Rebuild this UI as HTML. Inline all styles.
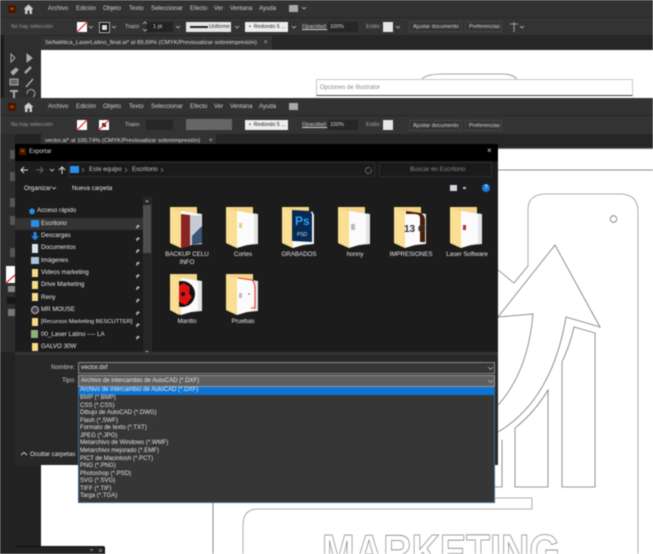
<!DOCTYPE html>
<html lang="es"><head><meta charset="utf-8"><title>Exportar</title>
<style>
html,body{margin:0;padding:0;background:#fff}
#r{position:relative;width:653px;height:554px;overflow:hidden;background:#fff;font-family:"Liberation Sans",sans-serif;filter:blur(.45px)}
#r div,#r span.a{position:absolute}
.t{position:absolute;white-space:nowrap;font-size:6px;line-height:8px;color:#d4d4d4}
.m{position:absolute;white-space:nowrap;font-size:6.1px;line-height:8px;color:#cfcfcf}
.l{position:absolute;white-space:nowrap;font-size:6.2px;line-height:8px;color:#e6e6e6}
.c{text-align:center;width:54px;line-height:7.5px;white-space:normal}
.d{position:absolute;white-space:nowrap;font-size:6.05px;line-height:7.6px;color:#e2e2e2;left:80px}
svg{position:absolute;overflow:visible}
</style></head><body><div id="r">
<!-- artwork -->
<svg style="left:0;top:0" width="653" height="554" viewBox="0 0 653 554" fill="none" stroke="#777" stroke-width=".8">
<path d="M498 170H653" stroke="#666"/>
<path d="M528 266V210Q528 194 546 194H620Q638 194 638 212V554" stroke="#999"/>
<circle cx="613.500" cy="219" r="3.300"/>
<path d="M498 270L514 283L528 266"/>
<path d="M498 317L555 245L600 327L566 317Q552 400 498 432"/>
<path d="M498 317L533 314Q528 372 498 405"/>
<path d="M574 327L595 333V487H562V362Q570 345 574 327Z"/>
<path d="M548 390V487H515V428Q535 412 548 390Z"/>
<path d="M502 440V487H495"/>
<path d="M495 498H532V509H258Q243 509 243 525V554" stroke="#999"/>
<path d="M213 465V554" stroke="#888" stroke-width="1"/>
<path d="M422 79Q426 74 445 74H503Q512 74 517 79" stroke="#888"/>
<text x="322" y="567" font-family="Liberation Sans" font-weight="700" font-size="46" textLength="238" lengthAdjust="spacingAndGlyphs" fill="#fff" stroke="#888" stroke-width=".8">MARKETING</text>
</svg>
<div style="left:316px;top:79px;width:317px;height:17px;background:#fff;border:1px solid #c9c9c9;border-bottom:1px solid #444;box-sizing:border-box"></div>
<span class="t" style="left:320px;top:84px;color:#8a8a8a">Opciones de Illustrator</span>

<!-- top Illustrator window -->
<div style="left:0;top:0;width:653px;height:17px;background:#323232"></div>
<div style="left:0;top:17px;width:653px;height:18px;background:#333;border-top:1px solid #272727;box-sizing:border-box"></div>
<div style="left:0;top:35px;width:653px;height:15px;background:#262626"></div>
<div style="left:41px;top:36px;width:231px;height:14px;background:#333"></div>
<div style="left:0;top:35px;width:41px;height:63px;background:#2e2e2e"></div>
<div style="left:0;top:35px;width:4px;height:63px;background:#1c1c1c"></div>
<div style="left:0;top:98px;width:633px;height:3px;background:#333"></div>
<div style="left:633px;top:98px;width:20px;height:3px;background:#333"></div>
<div style="left:8px;top:5px;width:8px;height:8px;background:#4a1500;color:#f90;font-size:4px;line-height:8px;text-align:center">Ai</div>
<svg style="left:23px;top:4px" width="11" height="10" viewBox="0 0 11 10"><path d="M.5 5L5.500.5L10.500 5H9V10H6.500V6.500H4.500V10H2V5Z" fill="#ccc"/></svg>
<span class="m" style="left:48px;top:5px">Archivo</span><span class="m" style="left:76px;top:5px">Edición</span><span class="m" style="left:103px;top:5px">Objeto</span><span class="m" style="left:129px;top:5px">Texto</span><span class="m" style="left:151px;top:5px">Seleccionar</span><span class="m" style="left:190px;top:5px">Efecto</span><span class="m" style="left:214px;top:5px">Ver</span><span class="m" style="left:230px;top:5px">Ventana</span><span class="m" style="left:259px;top:5px">Ayuda</span>
<div style="left:289px;top:5px;width:9px;height:7px;background:#aaa"></div>
<span class="t" style="left:11px;top:23px;font-size:5.500px;color:#9f9f9f">No hay selección</span>
<div style="left:77px;top:22px;width:10px;height:10px;background:#fff"></div>
<svg style="left:77px;top:22px" width="10" height="10"><path d="M0 10L10 0" stroke="#e22" stroke-width="1.200"/></svg>
<div style="left:99px;top:22px;width:11px;height:11px;background:#111;border:1px solid #aaa;box-sizing:border-box"></div>
<div style="left:102px;top:25px;width:5px;height:5px;background:#ddd"></div>
<span class="t" style="left:125px;top:23px;font-size:5.500px">Trazo:</span>
<div style="left:146px;top:22px;width:27px;height:10px;background:#232323"></div>
<span class="t" style="left:153px;top:23px;font-size:5.500px">1 pt</span>
<div style="left:186px;top:22px;width:45px;height:10px;background:#e8e8e8"></div>
<div style="left:190px;top:26px;width:18px;height:1.500px;background:#222"></div>
<span class="t" style="left:209px;top:23px;font-size:5.100px;color:#222">Uniforme</span>
<div style="left:245px;top:22px;width:43px;height:10px;background:#eee"></div>
<span class="t" style="left:249px;top:23px;font-size:5.300px;color:#222">•&nbsp; Redondo 5 ...</span>
<span class="t" style="left:302px;top:23px;font-size:5.500px;text-decoration:underline">Opacidad:</span>
<div style="left:328px;top:22px;width:30px;height:10px;background:#262626"></div>
<span class="t" style="left:330px;top:23px;font-size:5.500px">100%</span>
<span class="t" style="left:366px;top:23px;font-size:5.500px;color:#aaa">Estilo:</span>
<div style="left:383px;top:22px;width:10px;height:10px;background:#e6e6e6"></div>
<div style="left:409px;top:21px;width:53px;height:11px;border:1px solid #444;box-sizing:border-box"></div>
<span class="t" style="left:413px;top:23px;font-size:5.500px">Ajustar documento</span>
<div style="left:465px;top:21px;width:37px;height:11px;border:1px solid #444;box-sizing:border-box"></div>
<span class="t" style="left:469px;top:23px;font-size:5.500px">Preferencias</span>
<span class="t" style="left:45px;top:39px;font-size:5.900px;color:#dcdcdc">Señalética_LaserLatino_final.ai* al 89,69% (CMYK/Previsualizar sobreimpresión)</span>
<span class="t" style="left:264px;top:39px;color:#ccc">×</span>
<svg style="left:0;top:0" width="60" height="140" fill="none" stroke="#aaa" stroke-width="1">
<path d="M11 54V62L15 58Z"/><path d="M27 54V62L32 58Z" fill="#aaa"/>
<path d="M11 72L16 68L18 70L13 75Z" fill="#aaa"/><path d="M25 73L31 67" stroke-width="2.500"/>
<rect x="10" y="79" width="8" height="6" fill="#666"/><path d="M26 87L33 79" stroke-width="1.500"/>
<path d="M10 91H18M14 91V98" stroke-width="2"/><path d="M27 94A4 4 0 1 1 33 97"/>
</svg>
<!-- chevrons top -->
<svg style="left:0;top:0" width="653" height="133" fill="none" stroke="#bbb" stroke-width=".8">
<path d="M89 26L91 28L93 26M112 26L114 28L116 26M176 26L178 28L180 26M235 26L237 28L239 26M292 26L294 28L296 26M396 26L398 28L400 26M302 7L304 9L306 7M520 26L522 28L524 26M143 24L145 22L147 24M143 29L145 31L147 29M510 24H518M514 22V32"/>
<path d="M89 124L91 126L93 124M112 124L114 126L116 124M176 124L178 126L180 124M292 124L294 126L296 124M396 124L398 126L400 124M302 105L304 107L306 105M520 124L522 126L524 124M143 122L145 120L147 122M143 127L145 129L147 127M510 122H518M514 120V130"/>
</svg>

<!-- second Illustrator window -->
<div style="left:0;top:101px;width:653px;height:15px;background:#323232"></div>
<div style="left:0;top:115px;width:653px;height:19px;background:#333;border-top:1px solid #272727;box-sizing:border-box"></div>
<div style="left:0;top:134px;width:653px;height:14px;background:#262626"></div>
<div style="left:41px;top:134px;width:175px;height:11px;background:#333"></div>
<div style="left:0;top:134px;width:41px;height:420px;background:#222"></div>
<div style="left:0;top:134px;width:15px;height:218px;background:#2c2c2c"></div>
<div style="left:8px;top:103px;width:8px;height:8px;background:#4a1500;color:#f90;font-size:4px;line-height:8px;text-align:center">Ai</div>
<svg style="left:23px;top:102px" width="11" height="10" viewBox="0 0 11 10"><path d="M.5 5L5.500.5L10.500 5H9V10H6.500V6.500H4.500V10H2V5Z" fill="#ccc"/></svg>
<span class="m" style="left:48px;top:103px">Archivo</span><span class="m" style="left:76px;top:103px">Edición</span><span class="m" style="left:103px;top:103px">Objeto</span><span class="m" style="left:129px;top:103px">Texto</span><span class="m" style="left:151px;top:103px">Seleccionar</span><span class="m" style="left:190px;top:103px">Efecto</span><span class="m" style="left:214px;top:103px">Ver</span><span class="m" style="left:230px;top:103px">Ventana</span><span class="m" style="left:259px;top:103px">Ayuda</span>
<div style="left:289px;top:103px;width:9px;height:7px;background:#aaa"></div>
<span class="t" style="left:11px;top:121px;font-size:5.500px;color:#9f9f9f">No hay selección</span>
<div style="left:77px;top:120px;width:10px;height:10px;background:#fff"></div>
<svg style="left:77px;top:120px" width="10" height="10"><path d="M0 10L10 0" stroke="#e22" stroke-width="1.200"/></svg>
<div style="left:99px;top:120px;width:10px;height:10px;background:#fff"></div>
<svg style="left:99px;top:120px" width="10" height="10"><rect x="3" y="3" width="4" height="4" fill="#333"/><path d="M0 10L10 0" stroke="#e22" stroke-width="1.200"/></svg>
<span class="t" style="left:125px;top:121px;font-size:5.500px">Trazo:</span>
<div style="left:146px;top:120px;width:27px;height:10px;background:#262626"></div>
<div style="left:186px;top:119px;width:46px;height:11px;background:#666"></div>
<div style="left:245px;top:120px;width:43px;height:10px;background:#eee"></div>
<span class="t" style="left:249px;top:121px;font-size:5.300px;color:#222">•&nbsp; Redondo 5 ...</span>
<span class="t" style="left:302px;top:121px;font-size:5.500px;text-decoration:underline">Opacidad:</span>
<div style="left:328px;top:120px;width:30px;height:10px;background:#262626"></div>
<span class="t" style="left:330px;top:121px;font-size:5.500px">100%</span>
<span class="t" style="left:366px;top:121px;font-size:5.500px;color:#aaa">Estilo:</span>
<div style="left:383px;top:120px;width:10px;height:10px;background:#e6e6e6"></div>
<div style="left:409px;top:120px;width:53px;height:11px;border:1px solid #444;box-sizing:border-box"></div>
<span class="t" style="left:413px;top:122px;font-size:5.500px">Ajustar documento</span>
<div style="left:465px;top:120px;width:37px;height:11px;border:1px solid #444;box-sizing:border-box"></div>
<span class="t" style="left:469px;top:122px;font-size:5.500px">Preferencias</span>
<span class="t" style="left:45px;top:137px;font-size:5.900px;color:#dcdcdc">vector.ai* al 100,74% (CMYK/Previsualizar sobreimpresión)</span>
<span class="t" style="left:209px;top:137px;color:#ccc">×</span>
<div style="left:498px;top:148px;width:155px;height:1px;background:#777"></div>

<!-- left side pieces -->
<div style="left:6px;top:266px;width:9px;height:17px;background:#fff"></div>
<svg style="left:6px;top:266px" width="9" height="17"><path d="M0 17L9 9" stroke="#e22" stroke-width="1.200"/></svg>
<div style="left:7px;top:297px;width:8px;height:7px;background:#161616"></div>
<div style="left:8px;top:286px;width:7px;height:6px;background:#888"></div>
<div style="left:8px;top:309px;width:7px;height:7px;background:#777"></div>
<div style="left:10px;top:150px;width:5px;height:9px;background:#555"></div>
<div style="left:10px;top:172px;width:5px;height:9px;background:#555"></div>
<div style="left:10px;top:198px;width:5px;height:9px;background:#555"></div>
<div style="left:10px;top:216px;width:5px;height:9px;background:#555"></div>
<div style="left:10px;top:248px;width:5px;height:9px;background:#555"></div>

<!-- dialog -->
<div style="left:15px;top:144px;width:483px;height:321px;background:#1c1c1c"></div>
<div style="left:15px;top:144px;width:483px;height:17px;background:#000"></div>
<div style="left:19px;top:148px;width:7px;height:7px;background:#4a1500;color:#f90;font-size:3.500px;line-height:7px;text-align:center">Ai</div>
<span class="t" style="left:29px;top:148px;font-size:6px;color:#ddd">Exportar</span>
<span class="t" style="left:487px;top:147px;font-size:8px;color:#ddd">×</span>
<div style="left:68px;top:162px;width:307px;height:15px;background:#1a1a1a;border:1px solid #2c2c2c;box-sizing:border-box"></div>
<div style="left:379px;top:162px;width:113px;height:15px;background:#1a1a1a;border:1px solid #2c2c2c;box-sizing:border-box"></div>
<div style="left:70px;top:166px;width:9px;height:7px;background:#2b8fe8"></div>
<svg style="left:0;top:0" width="500" height="200" fill="none" stroke="#ddd" stroke-width="1">
<path d="M21 170H28M24 167L21 170L24 173"/><path d="M36 170H43M40 167L43 170L40 173" stroke="#666"/><path d="M50 169L52 171L54 169" stroke-width=".8"/><path d="M62 174V167M59 170L62 167L65 170"/>
<path d="M82 168L84 170L82 172M125 168L127 170L125 172M161 168L163 170L161 172" stroke="#888" stroke-width=".7"/>
<path d="M52 187L54 189L56 187" stroke="#ccc" stroke-width=".8"/>
<path d="M371 169A3 3 0 1 1 370 168" stroke="#888" stroke-width=".7"/>
</svg>
<span class="l" style="left:89px;top:166px;color:#c4c4c4">Este equipo</span>
<span class="l" style="left:132px;top:166px;color:#c4c4c4">Escritorio</span>
<span class="l" style="left:410px;top:166px;color:#888">Buscar en Escritorio</span>
<span class="l" style="left:24px;top:185px">Organizar</span>
<span class="l" style="left:72px;top:185px">Nueva carpeta</span>
<div style="left:450px;top:185px;width:7px;height:6px;background:#cfd8e0"></div>
<div style="left:463px;top:187px;width:3px;height:2px;background:#bbb"></div>
<div style="left:482px;top:184px;width:8px;height:8px;border-radius:50%;background:#1a78d8;color:#fff;font-size:6px;line-height:8px;text-align:center">?</div>

<!-- sidebar -->
<div style="left:15px;top:218px;width:128px;height:12px;background:#333"></div>
<div style="left:143px;top:197px;width:8px;height:155px;background:#262626"></div>
<div style="left:143px;top:205px;width:8px;height:48px;background:#4d4d4d"></div>
<div style="left:151px;top:197px;width:1px;height:155px;background:#2b2b2b"></div>
<span class="l" style="left:37px;top:207px">Acceso rápido</span>
<span class="a" style="left:29px;top:208px;width:6px;height:6px;background:#2b8fe8;clip-path:polygon(50% 0,100% 40%,80% 100%,20% 100%,0 40%)"></span>
<span class="l" style="left:41px;top:219.500px">Escritorio</span>
<span class="l" style="left:41px;top:232px">Descargas</span>
<span class="l" style="left:41px;top:244px">Documentos</span>
<span class="l" style="left:41px;top:256.500px">Imágenes</span>
<span class="l" style="left:41px;top:269px">Videos marketing</span>
<span class="l" style="left:41px;top:281px">Drive Marketing</span>
<span class="l" style="left:41px;top:293.500px">Reny</span>
<span class="l" style="left:41px;top:306px">MR MOUSE</span>
<span class="l" style="left:41px;top:318px;font-size:5.800px">[Recursos Marketing BESCUTTER]</span>
<span class="l" style="left:41px;top:330.500px">00_Laser Latino ---- LA</span>
<span class="l" style="left:41px;top:342.500px">GALVO 30W</span>
<div style="left:31px;top:220px;width:8px;height:7px;background:#2b8fe8"></div>
<svg style="left:31px;top:232px" width="8" height="9"><path d="M2.500 0H5.500V4H8L4 8.500L0 4H2.500Z" fill="#2b82dc"/></svg>
<div style="left:32px;top:244px;width:6px;height:9px;background:#d8e6f2"></div>
<div style="left:31px;top:257px;width:8px;height:7px;background:#a9c4dc"></div>
<div style="left:32px;top:269px;width:6px;height:8px;background:#f6dc86"></div>
<div style="left:32px;top:281px;width:6px;height:8px;background:#f6dc86"></div>
<div style="left:32px;top:293px;width:6px;height:8px;background:#f6dc86"></div>
<div style="left:31px;top:306px;width:8px;height:8px;border-radius:50%;background:#444;border:1px solid #bbb;box-sizing:border-box"></div>
<div style="left:32px;top:318px;width:6px;height:8px;background:#f6dc86"></div>
<div style="left:31px;top:330px;width:7px;height:8px;background:#8fb27a"></div>
<div style="left:32px;top:343px;width:6px;height:8px;background:#f6dc86"></div>
<svg style="left:0;top:0" width="160" height="360" fill="#aaa">
<path d="M136 226.500L138 224.500L140 226L138 227.500L136.500 229Z"/>
<path d="M136 239L138 237L140 238.500L138 240L136.500 241.500Z"/><path d="M136 251L138 249L140 250.500L138 252L136.500 253.500Z"/><path d="M136 263.500L138 261.500L140 263L138 264.500L136.500 266Z"/><path d="M136 276L138 274L140 275.500L138 277L136.500 278.500Z"/><path d="M136 288L138 286L140 287.500L138 289L136.500 290.500Z"/><path d="M136 300.500L138 298.500L140 300L138 301.500L136.500 303Z"/><path d="M136 313L138 311L140 312.500L138 314L136.500 315.500Z"/><path d="M136 325L138 323L140 324.500L138 326L136.500 327.500Z"/><path d="M136 337.500L138 335.500L140 337L138 338.500L136.500 340Z"/>
<path d="M145 202L147 200L149 202ZM145 351L147 353L149 351Z"/>
</svg>

<!-- folders -->
<svg width="0" height="0" style="position:absolute"><defs><g id="f">
<path d="M0 1H27V8L11 42L0 37Z" fill="#f5d688"/>
<path d="M12 5L32 8V38L12 40Z" fill="#e4e4e4"/>
<path d="M11 5L28 8V37L11 42Z" fill="#fbfbfb"/>
<path d="M0 1L11 6V42L0 37Z" fill="#f9de94"/>
</g></defs></svg>
<svg style="left:170px;top:206px" width="33" height="42"><use href="#f"/><path d="M11 8L20 9V40L11 42Z" fill="#8a2323"/><path d="M20 9L31 10V37L20 39Z" fill="#c6ccd4"/><path d="M22 30L32 20V37L22 39Z" fill="#3b5478"/></svg>
<svg style="left:226px;top:206px" width="33" height="42"><use href="#f"/><rect x="13" y="17" width="3" height="5" fill="#e8c98a"/></svg>
<svg style="left:282px;top:206px" width="33" height="42"><use href="#f"/><path d="M10 4L31 6V38L10 37Z" fill="#fff"/><path d="M10 4L28 5L30 8V36L10 35Z" fill="#062a52"/><text x="13" y="19" font-family="Liberation Sans" font-size="12" font-weight="700" fill="#2fa3f7">Ps</text><text x="15" y="30" font-family="Liberation Sans" font-size="5" fill="#ddd">PSD</text></svg>
<svg style="left:338px;top:206px" width="33" height="42"><use href="#f"/><rect x="13" y="18" width="4" height="6" fill="#bbb"/></svg>
<svg style="left:394px;top:206px" width="33" height="42"><use href="#f"/><path d="M12 5L27 7Q31 10 31 14V36H26V12Q26 8 20 8H12Z" fill="#4a1c08"/><text x="10" y="26" font-family="Liberation Sans" font-size="10" font-weight="700" fill="#333">13 O</text></svg>
<svg style="left:450px;top:206px" width="33" height="42"><use href="#f"/><rect x="13" y="19" width="3" height="5" fill="#a33"/></svg>
<svg style="left:170px;top:273px" width="33" height="42"><use href="#f"/><circle cx="12" cy="21" r="13" fill="#111"/><path d="M6 14L14 10L20 14L19 20L22 24L16 32L11 30L5 26Z" fill="#d11"/><path d="M0 1L9 4V42L0 37Z" fill="#f9de94"/><circle cx="13" cy="21" r="2" fill="#111"/></svg>
<svg style="left:226px;top:273px" width="33" height="42"><use href="#f"/><path d="M12 5L26 7Q29 10 29 14V35H25" fill="none" stroke="#e33" stroke-width="1"/><rect x="13" y="20" width="3" height="5" fill="#bbb"/><circle cx="23" cy="21" r=".8" fill="#e33"/></svg>
<span class="l c" style="left:160px;top:251px">BACKUP CELU INFO</span>
<span class="l c" style="left:216px;top:251px">Cortes</span>
<span class="l c" style="left:272px;top:251px">GRABADOS</span>
<span class="l c" style="left:328px;top:251px">honny</span>
<span class="l c" style="left:384px;top:251px">IMPRESIONES</span>
<span class="l c" style="left:440px;top:251px">Laser Software</span>
<span class="l c" style="left:160px;top:318px">Mantto</span>
<span class="l c" style="left:216px;top:318px">Pruebas</span>

<!-- bottom of dialog -->
<div style="left:15px;top:352px;width:483px;height:113px;background:#282828"></div>
<div style="left:15px;top:352px;width:483px;height:3px;background:#333"></div>
<span class="l" style="left:51px;top:364px;color:#c8c8c8">Nombre:</span>
<div style="left:78px;top:362px;width:417px;height:12px;background:#363636;border:1px solid #888;box-sizing:border-box"></div>
<span class="l" style="left:81px;top:364px">vector.dxf</span>
<span class="l" style="left:62px;top:377px;color:#c8c8c8">Tipo:</span>
<div style="left:78px;top:375px;width:417px;height:12px;background:#5e5e5e;border:1px solid #999;box-sizing:border-box"></div>
<span class="l" style="left:81px;top:377px;font-size:6.050px">Archivo de intercambio de AutoCAD (*.DXF)</span>
<span class="l" style="left:30px;top:451px">Ocultar carpetas</span>
<svg style="left:20px;top:451px" width="8" height="6"><path d="M1 4L4 1.500L7 4" fill="none" stroke="#ccc"/></svg>
<svg style="left:0;top:0" width="500" height="400" fill="none" stroke="#aaa" stroke-width=".8"><path d="M488 367L490.500 369.500L493 367M488 380L490.500 382.500L493 380"/></svg>

<!-- dropdown -->
<div style="left:78px;top:387px;width:417px;height:115.500px;background:#363636;border:1px solid #3b6a94;border-top:0;box-sizing:border-box"></div>
<div style="left:79px;top:387px;width:415px;height:8px;background:#0d74d4"></div>
<span class="d" style="top:387.300px;color:#f0f0f0">Archivo de intercambio de AutoCAD (*.DXF)</span>
<span class="d" style="top:395px">BMP (*.BMP)</span>
<span class="d" style="top:402.500px">CSS (*.CSS)</span>
<span class="d" style="top:410px">Dibujo de AutoCAD (*.DWG)</span>
<span class="d" style="top:417.700px">Flash (*.SWF)</span>
<span class="d" style="top:425.300px">Formato de texto (*.TXT)</span>
<span class="d" style="top:432.800px">JPEG (*.JPG)</span>
<span class="d" style="top:440.400px">Metarchivo de Windows (*.WMF)</span>
<span class="d" style="top:447.900px">Metarchivo mejorado (*.EMF)</span>
<span class="d" style="top:455.500px">PICT de Macintosh (*.PCT)</span>
<span class="d" style="top:463px">PNG (*.PNG)</span>
<span class="d" style="top:470.700px">Photoshop (*.PSD)</span>
<span class="d" style="top:478.300px">SVG (*.SVG)</span>
<span class="d" style="top:485.800px">TIFF (*.TIF)</span>
<span class="d" style="top:493.400px">Targa (*.TGA)</span>
<div style="left:15px;top:546px;width:90px;height:8px;background:#232323;border-top:1px solid #111;border-right:1px solid #111;box-sizing:border-box;border-radius:2px 2px 0 0"></div>
<div style="left:90px;top:549px;width:3px;height:2px;background:#666"></div>
<div style="left:99px;top:549px;width:3px;height:3px;background:#666"></div>
</div></body></html>
